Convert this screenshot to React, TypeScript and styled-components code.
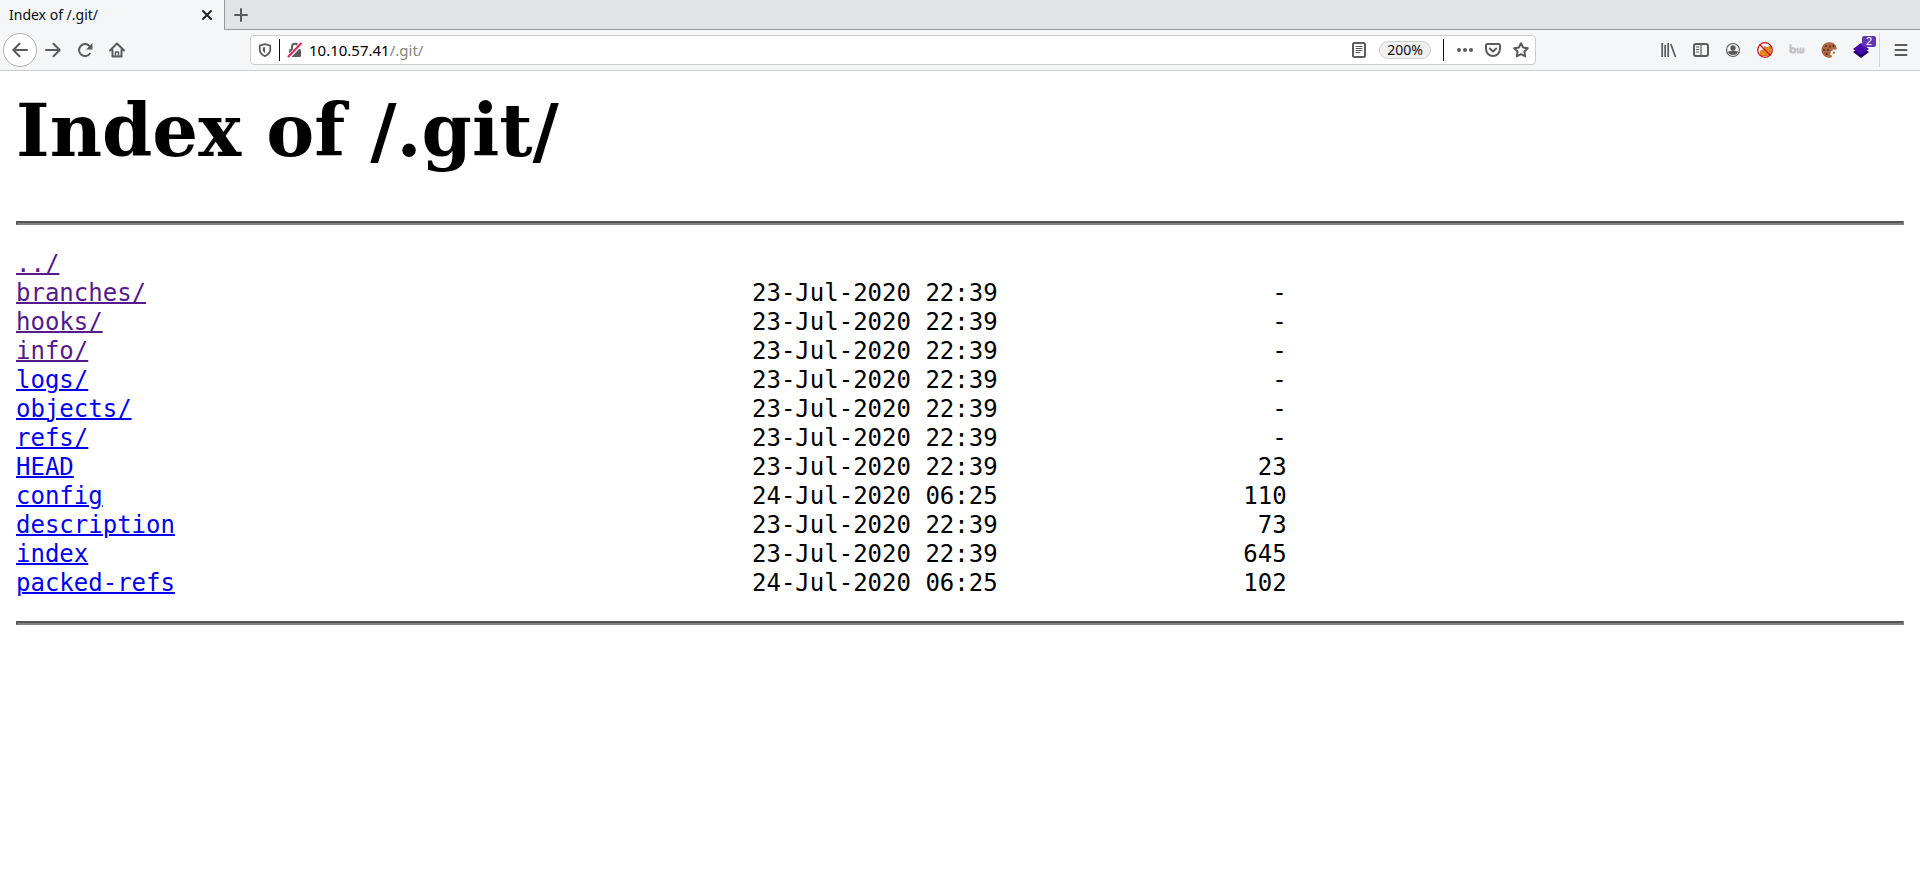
import React from "react";
import styled, { createGlobalStyle } from "styled-components";

const Global = createGlobalStyle`
  body { margin: 0; background: #fff; color: #000; }
  *, *::before, *::after { box-sizing: border-box; }
`;

const Browser = styled.div`
  font-family: "Noto Sans", sans-serif;
  font-size: 15px;
  color: #0c0c0d;
`;
const TabBar = styled.div`
  display: flex;
  height: 30px;
  background: #e2e3e5;
`;
const Tab = styled.div`
  display: flex;
  align-items: center;
  justify-content: space-between;
  width: 224px;
  padding: 0 7px 0 9px;
  background: #f5f6f8;
`;
const TabTitle = styled.span`
  line-height: 20px;
  font-size: 14px;
`;
const TabRest = styled.div`
  flex: 1;
  display: flex;
  align-items: center;
  padding-left: 6px;
  border-left: 1px solid #999;
  border-bottom: 1px solid #999;
`;
const IconButton = styled.button<{ $w?: number; $round?: boolean }>`
  position: relative;
  display: flex;
  align-items: center;
  justify-content: center;
  flex: none;
  width: ${(p) => p.$w ?? 32}px;
  height: ${(p) => (p.$round ? 34 : 20)}px;
  padding: 0;
  border: ${(p) => (p.$round ? "1px solid #b0b0b1" : "0")};
  border-radius: ${(p) => (p.$round ? "50%" : "0")};
  background: ${(p) => (p.$round ? "#fff" : "transparent")};
  color: #5b5b5c;
  svg { display: block; }
`;
const Toolbar = styled.div`
  display: flex;
  align-items: center;
  height: 41px;
  padding: 0 3px;
  background: #f5f6f8;
  border-bottom: 1px solid #ccc;
`;
const Address = styled.form`
  display: flex;
  align-items: center;
  flex: 1;
  height: 30px;
  margin: 0 117px;
  padding-left: 2px;
  border: 1px solid #ccc;
  border-radius: 4px;
  background: #fff;
`;
const AddressBreak = styled.span<{ $before?: number; $after?: number }>`
  width: 1px;
  height: 22px;
  margin: 0 ${(p) => p.$after ?? 0}px 0 ${(p) => p.$before ?? 0}px;
  background: #0c0c0d;
`;
const Url = styled.a`
  flex: 1;
  line-height: 20px;
  color: #000;
  text-decoration: none;
`;
const UrlPath = styled.span`
  color: #858585;
`;
const Zoom = styled.button`
  width: 52px;
  height: 18px;
  margin-left: 12px;
  padding: 0;
  border: 1px solid #d0d0d1;
  border-radius: 9px;
  background: #f0f0f1;
  color: #0c0c0d;
  font: 14px/16px "Noto Sans", sans-serif;
`;
const Extensions = styled.div`
  display: flex;
  align-items: center;
`;
const MenuBox = styled.div`
  display: flex;
  align-items: center;
  height: 34px;
  margin-left: 2px;
  padding-left: 5px;
  border-left: 1px solid #d5d6d8;
`;
const Badge = styled.span`
  position: absolute;
  top: -4px;
  right: 1px;
  width: 14px;
  height: 11px;
  border-radius: 2px;
  background: #6336b8;
  color: #fff;
  font-size: 11px;
  line-height: 11px;
  text-align: center;
`;

const Page = styled.main`
  padding: 17px 16px;
`;
const Heading = styled.h1`
  margin: 0 0 48px;
  font: bold 72px/85px "DejaVu Serif", serif;
`;
const Rule = styled.hr`
  height: 4px;
  margin: 0;
  border: 2px solid;
  border-color: #555 #808080 #808080 #555;
`;
const Listing = styled.table`
  margin: 25px 0 23px;
  border-collapse: collapse;
  font: 24px/29px "DejaVu Sans Mono", monospace;
  td { padding: 0; white-space: pre; }
`;
const NameCell = styled.td`
  width: 736px;
`;
const SizeCell = styled.td`
  width: 289px;
  text-align: right;
`;
const EntryLink = styled.a<{ $visited?: boolean }>`
  color: ${(p) => (p.$visited ? "#551a8b" : "#0000ee")};
  text-decoration: underline;
  text-decoration-thickness: 2px;
`;

const Icon = ({ children, size = 16 }: { children: React.ReactNode; size?: number }) => (
  <svg width={size} height={size} viewBox="0 0 16 16" fill="none" stroke="currentColor" strokeWidth="2" strokeLinecap="round" strokeLinejoin="round" aria-hidden="true">
    {children}
  </svg>
);

const entries: [string, string, string, boolean][] = [
  ["../", "", "", true],
  ["branches/", "23-Jul-2020 22:39", "-", true],
  ["hooks/", "23-Jul-2020 22:39", "-", true],
  ["info/", "23-Jul-2020 22:39", "-", true],
  ["logs/", "23-Jul-2020 22:39", "-", false],
  ["objects/", "23-Jul-2020 22:39", "-", false],
  ["refs/", "23-Jul-2020 22:39", "-", false],
  ["HEAD", "23-Jul-2020 22:39", "23", false],
  ["config", "24-Jul-2020 06:25", "110", false],
  ["description", "23-Jul-2020 22:39", "73", false],
  ["index", "23-Jul-2020 22:39", "645", false],
  ["packed-refs", "24-Jul-2020 06:25", "102", false],
];

export default function App() {
  return (
    <>
      <Global />
      <Browser>
        <TabBar>
          <Tab>
            <TabTitle>Index of /.git/</TabTitle>
            <IconButton $w={20} aria-label="Close tab">
              <Icon><path d="M4 4l8 8M12 4l-8 8" stroke="#222" /></Icon>
            </IconButton>
          </Tab>
          <TabRest>
            <IconButton $w={20} aria-label="New tab">
              <Icon><path d="M8 2v12M2 8h12" /></Icon>
            </IconButton>
          </TabRest>
        </TabBar>
        <Toolbar>
          <IconButton $w={34} $round aria-label="Back">
            <Icon><path d="M15 8H1.500M7.500 1.800L1.300 8l6.200 6.200" /></Icon>
          </IconButton>
          <IconButton aria-label="Forward">
            <Icon><path d="M1 8h13.500M8.500 1.800L14.700 8l-6.200 6.200" /></Icon>
          </IconButton>
          <IconButton aria-label="Reload">
            <Icon>
              <path d="M13 11.500A6 6 0 1 1 12.500 4" />
              <path d="M15.500 1v6.500H9z" fill="currentColor" stroke="none" />
            </Icon>
          </IconButton>
          <IconButton aria-label="Home">
            <Icon>
              <path d="M1 8.500L8 1.500l7 7M3.500 8v6.500h9V8" />
              <path d="M6.500 14V10h3v4" strokeWidth="1.500" />
            </Icon>
          </IconButton>
          <Address onSubmit={(e) => e.preventDefault()}>
            <IconButton $w={24} type="button" aria-label="Tracking protection">
              <Icon size={14}>
                <path d="M8 1.200L14 3v4.500c0 3.500-2.500 6-6 7.500-3.500-1.500-6-4-6-7.500V3z" />
                <path d="M8 4.500L5.500 5.200V8c0 1.500 1 2.800 2.500 3.700z" fill="currentColor" stroke="none" />
              </Icon>
            </IconButton>
            <AddressBreak $before={2} />
            <IconButton $w={29} type="button" aria-label="Connection is not secure">
              <Icon>
                <path d="M5 7V4.800a3 3 0 0 1 6 0V7" />
                <rect x="2" y="7" width="12" height="8" rx="1.500" fill="currentColor" stroke="none" />
                <path d="M2 14.500L14.500 1.500" stroke="#fff" strokeWidth="4" />
                <path d="M1.500 14.500L14 1.500" stroke="#e22850" />
              </Icon>
            </IconButton>
            <Url href="#">10.10.57.41<UrlPath>/.git/</UrlPath></Url>
            <IconButton $w={16} type="button" aria-label="Reader view">
              <Icon>
                <rect x="2" y="1" width="12" height="14" rx="1.500" />
                <path d="M5 4.500h6M5 6.500h6M5 8.500h6M5 10.500h4" strokeWidth="1" />
              </Icon>
            </IconButton>
            <Zoom type="button">200%</Zoom>
            <AddressBreak $before={12} $after={7} />
            <IconButton $w={28} type="button" aria-label="Page actions">
              <Icon>
                <g fill="currentColor" stroke="none">
                  <circle cx="2" cy="8" r="2" /><circle cx="8" cy="8" r="2" /><circle cx="14" cy="8" r="2" />
                </g>
              </Icon>
            </IconButton>
            <IconButton $w={28} type="button" aria-label="Save to Pocket">
              <Icon>
                <path d="M2.300 2h11.400a1.300 1.300 0 0 1 1.300 1.300V7a7 7 0 0 1-14 0V3.300A1.300 1.300 0 0 1 2.300 2z" />
                <path d="M4.800 6.500L8 9.500l3.200-3" />
              </Icon>
            </IconButton>
            <IconButton $w={28} type="button" aria-label="Bookmark this page">
              <Icon>
                <path d="M8 1.200l2.100 4.300 4.700.7-3.400 3.300.8 4.900L8 12.200l-4.200 2.200.8-4.900L1.200 6.200l4.700-.7z" strokeWidth="2" />
              </Icon>
            </IconButton>
          </Address>
          <Extensions>
            <IconButton aria-label="Library">
              <Icon><path d="M1.200 1v14M4.200 3v12M7.200 1v14M9.800 2l4.700 13" strokeWidth="1.700" strokeLinecap="butt" /></Icon>
            </IconButton>
            <IconButton aria-label="Sidebars">
              <Icon>
                <rect x="1" y="2" width="14" height="12" rx="2" />
                <path d="M8 2v12" strokeWidth="1.200" />
                <path d="M3.500 5h2.500M3.500 7.500h2.500M3.500 10h2" strokeWidth="1" />
              </Icon>
            </IconButton>
            <IconButton aria-label="Account">
              <Icon>
                <circle cx="8" cy="8" r="6.500" strokeWidth="1.200" />
                <circle cx="8" cy="6" r="2.700" fill="currentColor" stroke="none" />
                <path d="M3 9.800C5 8.500 11 8.500 13 9.800 12 14.200 4 14.200 3 9.800z" fill="currentColor" stroke="none" />
              </Icon>
            </IconButton>
            <IconButton aria-label="FoxyProxy">
              <Icon>
                <path d="M3 12l1-3.500 3.500-.8V4.500L9.500 5.500l2-.2 2-1 .3 4-.8 3.700-3 1.500H4z" fill="#e58a1e" stroke="#c97715" strokeWidth="1" />
                <circle cx="8" cy="8" r="7.300" stroke="#d3141c" strokeWidth="1.300" />
                <path d="M2.800 2.800l10.400 10.400" stroke="#d3141c" strokeWidth="1.300" />
              </Icon>
            </IconButton>
            <IconButton aria-label="BuiltWith">
              <Icon>
                <g stroke="#c3c3c4" strokeWidth="2.200">
                  <path d="M1.500 3v7" /><circle cx="4" cy="8.500" r="2.200" />
                  <path d="M8.500 6.500v2.500a1.500 1.500 0 0 0 3 0V6.500M11.500 9a1.500 1.500 0 0 0 3 0V6.500" />
                </g>
              </Icon>
            </IconButton>
            <IconButton aria-label="Cookie editor">
              <Icon>
                <path d="M10.500.5A7.800 7.800 0 1 0 11 15.300l-.5-2-1.500-1 1-1.500-.5-1.500 2-.5.500-1.500 2 .5 1.800-.5C15.800 4 13.500 1 10.500.5z" fill="#ad683f" stroke="none" />
                <path d="M12 9.500l2 .5-.5 2-1.800-.5z" fill="#ad683f" stroke="none" />
                <g fill="#55291a" stroke="none">
                  <circle cx="5" cy="4" r="1" /><circle cx="9" cy="4.500" r="1" /><circle cx="3" cy="8" r="1" />
                  <circle cx="7" cy="8" r="1" /><circle cx="5.500" cy="12" r="1" /><circle cx="12.500" cy="4" r="1" />
                </g>
              </Icon>
            </IconButton>
            <IconButton aria-label="Wappalyzer">
              <Icon>
                <path d="M0 10l8-5 8 5-8 6z" fill="#25056b" stroke="none" />
                <path d="M0 7l8-6 8 6-8 6z" fill="#4608ad" stroke="none" />
              </Icon>
              <Badge>2</Badge>
            </IconButton>
            <MenuBox>
              <IconButton aria-label="Open menu">
                <Icon><path d="M2.500 3h11M2.500 8h11M2.500 13h11" /></Icon>
              </IconButton>
            </MenuBox>
          </Extensions>
        </Toolbar>
      </Browser>
      <Page>
        <Heading>Index of /.git/</Heading>
        <Rule />
        <Listing>
          <tbody>
            {entries.map(([name, date, size, visited]) => (
              <tr key={name}>
                <NameCell><EntryLink href="#" $visited={visited}>{name}</EntryLink></NameCell>
                <td>{date}</td>
                <SizeCell>{size}</SizeCell>
              </tr>
            ))}
          </tbody>
        </Listing>
        <Rule />
      </Page>
    </>
  );
}
